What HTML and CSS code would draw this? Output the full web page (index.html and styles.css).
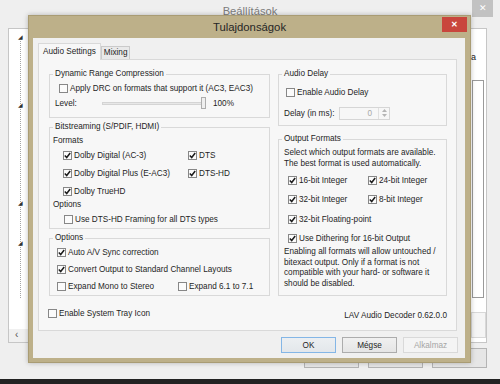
FILE: index.html
```html
<!DOCTYPE html>
<html lang="hu">
<head>
    <meta charset="UTF-8">
    <title>Tulajdonságok</title>
    <link rel="stylesheet" href="styles.css">
</head>
<body>

<!-- background window -->
<div class="main-win">
    <div class="main-title">
        <span class="main-caption">Beállítások</span>
        <span class="main-close">✕</span>
    </div>
    <div class="main-panel">
        <div class="tree">
            <span class="node n1">◢</span>
            <span class="node n2">◢</span>
            <span class="node n3">◢</span>
            <span class="node n4">◢</span>
            <span class="tree-scroll">‹</span>
        </div>
        <div class="panel-fill"></div>
        <div class="side">
            <span class="side-text">a</span>
            <div class="side-box"></div>
            <div class="side-box2"></div>
        </div>
    </div>
    <div class="main-buttons">
        <span class="ghost-btn"></span>
        <span class="ghost-btn"></span>
        <span class="ghost-btn"></span>
    </div>
</div>
<div class="taskbar"></div>

<!-- property dialog -->
<div class="dialog">
    <div class="dlg-title">
        <span class="dlg-caption">Tulajdonságok</span>
        <span class="dlg-close">✕</span>
    </div>
    <div class="dlg-client">
        <div class="tabs">
            <span class="tab active">Audio Settings</span>
            <span class="tab">Mixing</span>
        </div>
        <div class="page">
            <div class="cols">
                <div class="col">
                    <fieldset class="grp drc">
                        <legend>Dynamic Range Compression</legend>
                        <label class="chk"><span class="box"></span>Apply DRC on formats that support it (AC3, EAC3)</label>
                        <div class="level-row">
                            <span class="level-label">Level:</span>
                            <span class="slider"><span class="track"></span><span class="thumb"></span></span>
                            <span class="pct">100%</span>
                        </div>
                    </fieldset>

                    <fieldset class="grp bits">
                        <legend>Bitstreaming (S/PDIF, HDMI)</legend>
                        <div class="sub">Formats</div>
                        <div class="fmt-grid">
                            <label class="chk"><span class="box"><svg viewBox="0 0 7 7" width="7" height="7"><path d="M0.8 3.5 L2.7 5.5 L6.2 1" fill="none" stroke="#1b1b1b" stroke-width="1.5"/></svg></span>Dolby Digital (AC-3)</label>
                            <label class="chk"><span class="box"><svg viewBox="0 0 7 7" width="7" height="7"><path d="M0.8 3.5 L2.7 5.5 L6.2 1" fill="none" stroke="#1b1b1b" stroke-width="1.5"/></svg></span>DTS</label>
                            <label class="chk"><span class="box"><svg viewBox="0 0 7 7" width="7" height="7"><path d="M0.8 3.5 L2.7 5.5 L6.2 1" fill="none" stroke="#1b1b1b" stroke-width="1.5"/></svg></span>Dolby Digital Plus (E-AC3)</label>
                            <label class="chk"><span class="box"><svg viewBox="0 0 7 7" width="7" height="7"><path d="M0.8 3.5 L2.7 5.5 L6.2 1" fill="none" stroke="#1b1b1b" stroke-width="1.5"/></svg></span>DTS-HD</label>
                            <label class="chk"><span class="box"><svg viewBox="0 0 7 7" width="7" height="7"><path d="M0.8 3.5 L2.7 5.5 L6.2 1" fill="none" stroke="#1b1b1b" stroke-width="1.5"/></svg></span>Dolby TrueHD</label>
                        </div>
                        <div class="sub">Options</div>
                        <label class="chk framing"><span class="box"></span>Use DTS-HD Framing for all DTS types</label>
                    </fieldset>

                    <fieldset class="grp opts">
                        <legend>Options</legend>
                        <label class="chk"><span class="box"><svg viewBox="0 0 7 7" width="7" height="7"><path d="M0.8 3.5 L2.7 5.5 L6.2 1" fill="none" stroke="#1b1b1b" stroke-width="1.5"/></svg></span>Auto A/V Sync correction</label>
                        <label class="chk"><span class="box"><svg viewBox="0 0 7 7" width="7" height="7"><path d="M0.8 3.5 L2.7 5.5 L6.2 1" fill="none" stroke="#1b1b1b" stroke-width="1.5"/></svg></span>Convert Output to Standard Channel Layouts</label>
                        <div class="expand-row">
                            <label class="chk mono"><span class="box"></span>Expand Mono to Stereo</label>
                            <label class="chk"><span class="box"></span>Expand 6.1 to 7.1</label>
                        </div>
                    </fieldset>
                </div>

                <div class="col">
                    <fieldset class="grp delay">
                        <legend>Audio Delay</legend>
                        <label class="chk"><span class="box"></span>Enable Audio Delay</label>
                        <div class="delay-row">
                            <span class="delay-label">Delay (in ms):</span>
                            <span class="spin">
                                <span class="spin-val">0</span>
                                <span class="spin-btns">
                                    <svg viewBox="0 0 5 3" width="5" height="3"><path d="M0 3 L2.5 0 L5 3 Z" fill="#b5b5b5"/></svg>
                                    <svg viewBox="0 0 5 3" width="5" height="3"><path d="M0 0 L2.5 3 L5 0 Z" fill="#b5b5b5"/></svg>
                                </span>
                            </span>
                        </div>
                    </fieldset>

                    <fieldset class="grp outfmt">
                        <legend>Output Formats</legend>
                        <p class="desc">Select which output formats are available.<br>The best format is used automatically.</p>
                        <div class="of-grid">
                            <label class="chk"><span class="box"><svg viewBox="0 0 7 7" width="7" height="7"><path d="M0.8 3.5 L2.7 5.5 L6.2 1" fill="none" stroke="#1b1b1b" stroke-width="1.5"/></svg></span>16-bit Integer</label>
                            <label class="chk"><span class="box"><svg viewBox="0 0 7 7" width="7" height="7"><path d="M0.8 3.5 L2.7 5.5 L6.2 1" fill="none" stroke="#1b1b1b" stroke-width="1.5"/></svg></span>24-bit Integer</label>
                            <label class="chk"><span class="box"><svg viewBox="0 0 7 7" width="7" height="7"><path d="M0.8 3.5 L2.7 5.5 L6.2 1" fill="none" stroke="#1b1b1b" stroke-width="1.5"/></svg></span>32-bit Integer</label>
                            <label class="chk"><span class="box"><svg viewBox="0 0 7 7" width="7" height="7"><path d="M0.8 3.5 L2.7 5.5 L6.2 1" fill="none" stroke="#1b1b1b" stroke-width="1.5"/></svg></span>8-bit Integer</label>
                            <label class="chk wide"><span class="box"><svg viewBox="0 0 7 7" width="7" height="7"><path d="M0.8 3.5 L2.7 5.5 L6.2 1" fill="none" stroke="#1b1b1b" stroke-width="1.5"/></svg></span>32-bit Floating-point</label>
                            <label class="chk wide"><span class="box"><svg viewBox="0 0 7 7" width="7" height="7"><path d="M0.8 3.5 L2.7 5.5 L6.2 1" fill="none" stroke="#1b1b1b" stroke-width="1.5"/></svg></span>Use Dithering for 16-bit Output</label>
                        </div>
                        <p class="note">Enabling all formats will allow untouched /<br>bitexact output. Only if a format is not<br>compatible with your hard- or software it<br>should be disabled.</p>
                    </fieldset>
                </div>
            </div>

            <div class="page-foot">
                <label class="chk tray"><span class="box"></span>Enable System Tray Icon</label>
                <span class="version">LAV Audio Decoder 0.62.0.0</span>
            </div>
        </div>

        <div class="dlg-buttons">
            <button class="btn default">OK</button>
            <button class="btn">Mégse</button>
            <button class="btn disabled">Alkalmaz</button>
        </div>
    </div>
</div>

</body>
</html>
```

FILE: styles.css
```css
* {
    box-sizing: border-box;
}
body {
    margin: 0;
    width: 500px;
    height: 384px;
    overflow: hidden;
    position: relative;
    background: #262626;
    font-family: "Liberation Sans", Arial, sans-serif;
    font-size: 8.2px;
    color: #1e1e1e;
}

/* background window */
.main-win {
    height: 379px;
    background: #efefef;
    display: flex;
    flex-direction: column;
}
.main-title {
    height: 28px;
    display: grid;
    grid-template-columns: 1fr auto 1fr;
    align-items: start;
}
.main-caption {
    grid-column: 2;
    font-size: 11.2px;
    color: #7c7c7c;
    padding-top: 5px;
}
.main-close {
    grid-column: 3;
    justify-self: end;
    width: 21px;
    height: 17px;
    margin-right: 7px;
    background: #c2c2c2;
    color: #fff;
    text-align: center;
    font-size: 9px;
    line-height: 17px;
}
.main-panel {
    height: 315px;
    margin: 0 13px 0 8px;
    background: #fff;
    border: 1px solid #c6c6c6;
    display: flex;
}
.tree {
    width: 20px;
    display: flex;
    flex-direction: column;
    background: repeating-linear-gradient(to bottom, #a5a5a5 0 1px, transparent 1px 2px) 11px 12px / 1px 258px no-repeat;
}
.node {
    height: 8px;
    font-size: 6px;
    line-height: 8px;
    padding-left: 9px;
    color: #333;
}
.n1 { margin-top: 4px; }
.n2 { margin-top: 60px; }
.n3 { margin-top: 90px; }
.n4 { margin-top: 32px; }
.tree-scroll {
    margin-top: auto;
    height: 13px;
    padding-left: 6px;
    font-size: 10px;
    line-height: 12px;
    color: #555;
    background: #f0f0f0;
}
.panel-fill {
    flex: 1;
}
.side {
    width: 15px;
    display: flex;
    flex-direction: column;
}
.side-text {
    margin-top: 23px;
    font-size: 9px;
    line-height: 10px;
    color: #222;
}
.side-box {
    margin: 18px 2px 0 1px;
    height: 218px;
    border: 1px solid #9a9a9a;
}
.side-box2 {
    margin-top: 14px;
    height: 26px;
    border: 1px solid #d8d8d8;
    background: #f5f5f5;
}
.main-buttons {
    display: flex;
    justify-content: flex-end;
    gap: 9px;
    margin-top: 5px;
    padding-right: 13px;
}
.ghost-btn {
    width: 55px;
    height: 20px;
    border: 1px solid #b4b4b4;
    background: #e6e6e6;
}
.taskbar {
    height: 5px;
    background: #222;
}

/* property dialog */
.dialog {
    position: absolute;
    left: 28px;
    top: 15px;
    width: 443px;
    height: 348px;
    background: #bdb089;
    border: 1px solid #a99c74;
    box-shadow: 0 0 5px rgba(0, 0, 0, 0.25);
    display: flex;
    flex-direction: column;
}
.dlg-title {
    height: 22px;
    display: grid;
    grid-template-columns: 1fr auto 1fr;
    align-items: start;
}
.dlg-caption {
    grid-column: 2;
    font-size: 11.3px;
    line-height: 22px;
    color: #262626;
}
.dlg-close {
    grid-column: 3;
    justify-self: end;
    width: 25px;
    height: 15px;
    margin: 1px 3px 0 0;
    background: #c9463d;
    color: #fff;
    font-size: 8px;
    font-weight: bold;
    line-height: 15px;
    text-align: center;
}
.dlg-client {
    flex: 1;
    margin: 0 5px 4px 4px;
    background: #f0f0f0;
    padding: 5px 7px 0 5px;
}

/* tabs */
.tabs {
    height: 16px;
    display: flex;
    align-items: flex-end;
}
.tab {
    height: 13px;
    padding: 0 2px;
    border: 1px solid #cacaca;
    border-bottom: none;
    background: #e9e9e9;
    line-height: 12px;
}
.tab.active {
    position: relative;
    z-index: 1;
    height: 17px;
    margin-bottom: -1px;
    padding: 0 4px;
    border-color: #d9d9d9;
    background: #f7f7f7;
    line-height: 15px;
}
.page {
    height: 272px;
    margin-right: 1px;
    border: 1px solid #d9d9d9;
    background: #f7f7f7;
    padding: 9px 9px 0 10px;
}
.cols {
    display: grid;
    grid-template-columns: 221px 169px;
    column-gap: 8px;
    align-items: start;
}

/* group boxes */
.grp {
    margin: 0;
    min-width: 0;
    border: 1px solid #d9d9d9;
    padding: 0 5px 0 5px;
}
.grp legend {
    padding: 0 2px;
    margin-left: -2px;
    line-height: 10px;
}
.chk {
    display: flex;
    align-items: center;
    height: 18px;
    white-space: nowrap;
}
.box {
    flex: none;
    width: 9px;
    height: 9px;
    margin-right: 2px;
    border: 1px solid #878787;
    background: #fbfbfb;
    display: flex;
    align-items: center;
    justify-content: center;
}
.sub {
    height: 10px;
    line-height: 10px;
    margin-left: -2px;
}

.drc {
    padding-bottom: 8px;
}
.drc .chk {
    margin-left: 4px;
}
.level-row {
    height: 12px;
    display: flex;
    align-items: center;
}
.level-label {
    width: 47px;
}
.slider {
    width: 104px;
    display: flex;
    align-items: center;
}
.track {
    flex: 1;
    height: 3px;
    background: #e7e7e7;
    border: 1px solid #d4d4d4;
}
.thumb {
    width: 5px;
    height: 12px;
    margin-left: -2px;
    border: 1px solid #adadad;
    background: #efefef;
}
.pct {
    margin-left: 7px;
}

.bits {
    margin-top: 4px;
}
.bits .sub:first-of-type {
    margin-top: 4px;
}
.fmt-grid {
    display: grid;
    grid-template-columns: 125px auto;
    padding-left: 8px;
}
.framing {
    margin-left: 9px;
}

.opts {
    margin-top: 4px;
    padding-top: 1px;
}
.opts .chk {
    height: 17px;
    margin-left: 2px;
}
.expand-row {
    display: flex;
}
.opts .mono {
    width: 119px;
}

.delay {
    padding-top: 4px;
    padding-bottom: 5px;
}
.delay .chk {
    margin-left: 2px;
}
.delay-row {
    height: 14px;
    margin-top: 5px;
    display: flex;
    align-items: center;
}
.delay-label {
    width: 55px;
}
.spin {
    width: 51px;
    height: 13px;
    border: 1px solid #d6d6d6;
    background: #f7f7f7;
    display: flex;
}
.spin-val {
    flex: 1;
    text-align: right;
    padding-right: 6px;
    line-height: 11px;
    color: #a8a8a8;
}
.spin-btns {
    width: 11px;
    border-left: 1px solid #e0e0e0;
    display: flex;
    flex-direction: column;
    align-items: center;
    justify-content: space-around;
    padding: 1px 0;
}

.outfmt {
    margin-top: 8px;
    padding-top: 4px;
    padding-bottom: 6px;
}
.desc {
    margin: 0;
    line-height: 10.5px;
}
.of-grid {
    display: grid;
    grid-template-columns: 80px auto;
    margin-top: 1.5px;
    padding-left: 4px;
}
.of-grid .chk {
    height: 19.5px;
}
.of-grid .wide {
    grid-column: 1 / -1;
}
.note {
    margin: -1.5px 0 0;
    line-height: 10.6px;
    white-space: nowrap;
}

.page-foot {
    height: 18px;
    margin-top: 8px;
    display: flex;
    justify-content: space-between;
    align-items: center;
}
.tray {
    margin-left: -1px;
}
.version {
    margin-top: 4px;
}

/* dialog buttons */
.dlg-buttons {
    display: flex;
    justify-content: flex-end;
    gap: 6px;
    margin-top: 6px;
}
.btn {
    width: 55px;
    height: 16px;
    padding: 0;
    font: inherit;
    color: #1e1e1e;
    border: 1px solid #acacac;
    background: linear-gradient(#f0f0f0, #e5e5e5);
}
.btn.default {
    border-color: #84b6e6;
    background: linear-gradient(#eceff2, #e3e7eb);
}
.btn.disabled {
    border-color: #d9d9d9;
    background: #f4f4f4;
    color: #a5a5a5;
}
```
